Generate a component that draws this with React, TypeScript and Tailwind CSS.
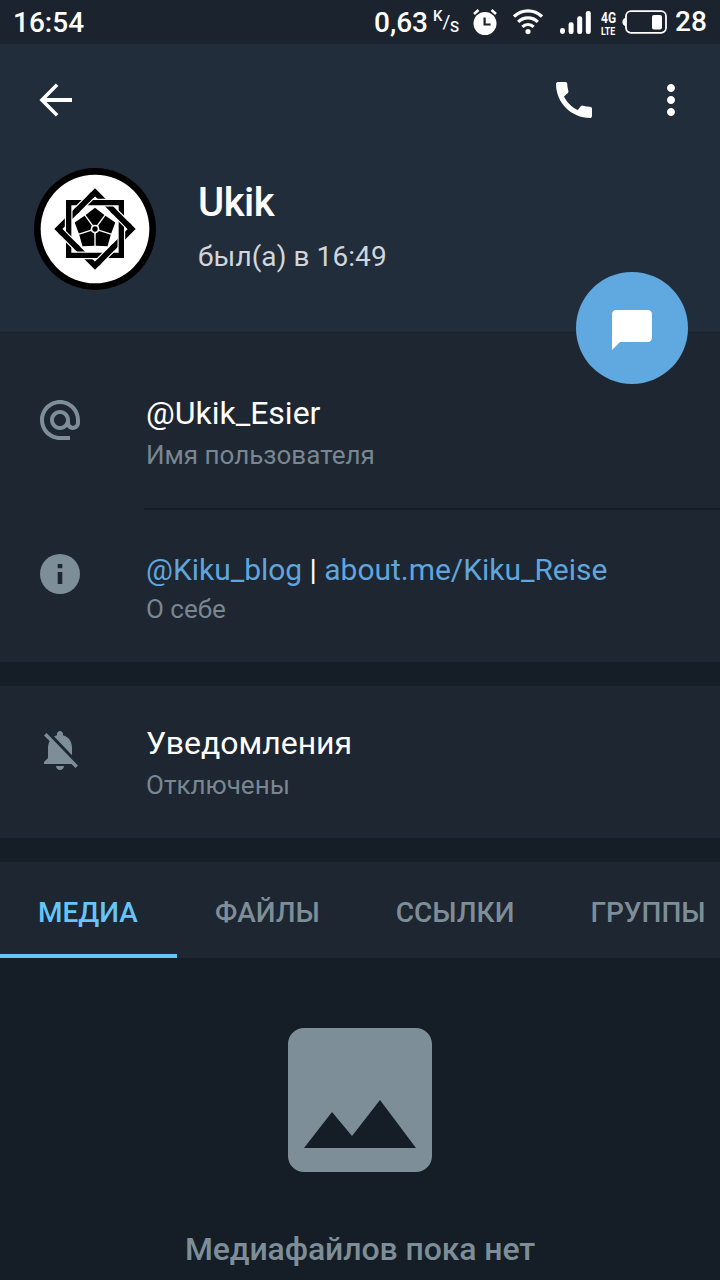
import type { ReactNode } from "react";
import {
  MdAlternateEmail,
  MdCall,
  MdChatBubble,
  MdMoreVert,
  MdNotificationsOff,
  MdPhoto,
} from "react-icons/md";

const TABS = ["МЕДИА", "ФАЙЛЫ", "ССЫЛКИ", "ГРУППЫ"];

function AlarmIcon() {
  return (
    <svg width="26" height="28" viewBox="0 0 26 28" fill="none">
      <circle cx="13" cy="15.5" r="11.5" fill="#fff" />
      <path d="M2 6 6.5 2M24 6 19.5 2" stroke="#fff" strokeWidth="2.6" />
      <path d="M12.6 9.5v7h6" stroke="#1b232e" strokeWidth="2.2" />
    </svg>
  );
}

function WifiIcon() {
  return (
    <svg width="30" height="26" viewBox="0 0 30 26" fill="none" stroke="#fff" strokeWidth="3.2">
      <path d="M1 7.6a20 20 0 0 1 28 0" />
      <path d="M5.2 12.8a14 14 0 0 1 19.6 0" />
      <path d="M9.4 17.8a8 8 0 0 1 11.2 0" />
      <circle cx="15" cy="22.6" r="2.6" fill="#fff" stroke="none" />
    </svg>
  );
}

function SignalIcon() {
  return (
    <svg width="32" height="23" viewBox="0 0 32 23" fill="#fff">
      <rect x="0" y="17" width="5" height="6" rx="2.4" />
      <rect x="8.6" y="11.2" width="5" height="11.8" rx="2.2" />
      <rect x="17.2" y="5.2" width="5" height="17.8" rx="2.2" />
      <rect x="25.8" y="0" width="5" height="23" rx="2.2" />
    </svg>
  );
}

function BatteryIcon() {
  return (
    <svg width="46" height="24" viewBox="0 0 46 24">
      <path d="M4 7.5C1.6 8.2.4 10 .4 12s1.2 3.8 3.6 4.5z" fill="#fff" />
      <rect x="4" y="1.2" width="40" height="21.6" rx="5" fill="none" stroke="#fff" strokeWidth="1.8" />
      <rect x="30" y="5" width="10" height="14.5" rx="2" fill="#fff" />
    </svg>
  );
}

function BackIcon() {
  return (
    <svg width="48" height="48" viewBox="0 0 48 48" fill="none" stroke="#fff">
      <path d="M11 24H40" strokeWidth="4" />
      <path d="M25.1 8.8 9.9 24l15.2 15.2" strokeWidth="3.5" />
    </svg>
  );
}

function InfoIcon() {
  return (
    <svg width="48" height="48" viewBox="0 0 48 48" fill="#1d2631" className="-mt-[2px]">
      <circle cx="24" cy="24" r="20" fill="#7d8e98" />
      <rect x="21.7" y="14" width="4.6" height="4.2" />
      <rect x="21.7" y="22" width="4.6" height="12" />
    </svg>
  );
}

/** Woven square + diamond around a five-petal flower. */
function Avatar() {
  return (
    <svg width="122" height="122" viewBox="-183 -183 366 366">
      <circle r="183" fill="#000" />
      <circle r="163" fill="#fff" />
      <g fill="none">
        <path d="M0-110 110 0 0 110-110 0z" stroke="#000" strokeWidth="17" />
        <path d="M-79-79H79V79H-79z" stroke="#fff" strokeWidth="23" />
        <path d="M-79-79H79V79H-79z" stroke="#000" strokeWidth="16" />
        {[0, 90, 180, 270].map((angle) => (
          <g key={angle} transform={`rotate(${angle})`}>
            <path d="M-52-58-13-97" stroke="#fff" strokeWidth="24" />
            <path d="M-58-52-6-104" stroke="#000" strokeWidth="17" />
          </g>
        ))}
      </g>
      {[0, 72, 144, 216, 288].map((angle) => (
        <path key={angle} d="M-6-12-28-42 0-64 28-42 6-12z" transform={`rotate(${angle})`} />
      ))}
      <circle r="13" fill="#fff" />
      <circle r="8" />
    </svg>
  );
}

function StatusBar() {
  return (
    <div className="flex h-11 bg-[#1b232e] pl-[13px] text-[28px] font-medium leading-[33px] text-white">
      <span className="w-[361px] pt-[6px]">16:54</span>
      <span className="w-[59px] pt-[6px]">0,63</span>
      <span className="flex w-[39px] text-[15px] leading-5">
        <span className="w-[9.5px] pt-[6px]">K</span>
        <span className="w-[7.5px] pt-[12px] text-[19px] font-normal">/</span>
        <span className="pt-[17px]">S</span>
      </span>
      <span className="w-[41px] pt-2">
        <AlarmIcon />
      </span>
      <span className="w-[47px] pt-[9px]">
        <WifiIcon />
      </span>
      <span className="w-[41px] pt-[11px]">
        <SignalIcon />
      </span>
      <span className="flex w-[21px] flex-col pt-[11px] font-bold">
        <span className="origin-left scale-x-[0.8] text-[15px] leading-[15px]">4G</span>
        <span className="origin-left scale-x-[0.8] text-[11px] leading-[11px]">LTE</span>
      </span>
      <span className="w-[53px] pt-[10px]">
        <BatteryIcon />
      </span>
      <span className="pt-[5px]">28</span>
    </div>
  );
}

function InfoRow({
  icon,
  title,
  label,
  className,
  titleClass = "text-[32px]",
  gap = "mt-2",
}: {
  icon: ReactNode;
  title: ReactNode;
  label: string;
  className: string;
  titleClass?: string;
  gap?: string;
}) {
  return (
    <div className={`flex pl-9 ${className}`}>
      <div className="w-[110px] pt-[2px] text-[#7d8e98]">{icon}</div>
      <div>
        <p className={`leading-[38px] text-white ${titleClass}`}>{title}</p>
        <p className={`text-[26px] leading-[30px] text-[#788791] ${gap}`}>{label}</p>
      </div>
    </div>
  );
}

export default function App() {
  return (
    <div className="flex h-[1280px] w-[720px] flex-col overflow-hidden whitespace-nowrap bg-[#151d26] font-['Roboto',sans-serif]">
      <StatusBar />

      <header className="relative h-[288px] bg-[#222d3b] text-white">
        <div className="flex h-28 items-center pl-8 pr-[25px]">
          <BackIcon />
          <MdCall size={48} className="ml-auto" />
          <MdMoreVert size={48} className="ml-[49px]" />
        </div>
        <div className="flex pl-[34px] pt-3">
          <Avatar />
          <div className="ml-[42px] pt-[11px]">
            <h1 className="text-[40px] font-medium leading-[47px] tracking-[-0.5px]">Ukik</h1>
            <p className="mt-[14px] text-[28px] leading-[33px] tracking-[0.08px] text-[#d0d6dc]">был(а) в 16:49</p>
          </div>
        </div>
        <button className="absolute right-8 top-[228px] flex h-28 w-28 items-center justify-center rounded-full bg-[#60a8e0]">
          <MdChatBubble size={48} className="mt-1" />
        </button>
      </header>

      <section className="h-[330px] border-t border-[#19212b] bg-[#1d2631]">
        <InfoRow
          className="h-[175px] pt-[61px]"
          icon={<MdAlternateEmail size={48} />}
          title="@Ukik_Esier"
          label="Имя пользователя"
        />
        <div className="ml-36 h-[2px] bg-[#151c25]" />
        <InfoRow
          className="pt-10"
          icon={<InfoIcon />}
          title={
            <>
              <span className="text-[#60a5dc]">@Kiku_blog</span> |{" "}
              <span className="text-[#60a5dc]">about.me/Kiku_Reise</span>
            </>
          }
          titleClass="pt-px text-[30px] tracking-[-0.03px]"
          label="О себе"
          gap="mt-[5px]"
        />
      </section>

      <section className="mt-6 h-[152px] bg-[#1d2631]">
        <InfoRow
          className="pt-[38px]"
          icon={<MdNotificationsOff size={48} />}
          title="Уведомления"
          label="Отключены"
        />
      </section>

      <nav className="mt-6 flex h-24 shrink-0 bg-[#1d2631] text-[28px] font-medium leading-[33px]">
        {TABS.map((tab, i) => (
          <div
            key={tab}
            className={`shrink-0 border-b-4 pl-[38px] pt-[34px] ${
              i === 0 ? "w-[177px] border-[#65c5f8] text-[#65c5f8]" : "border-transparent pr-[38px] text-[#7d8e98]"
            }`}
          >
            {tab}
          </div>
        ))}
      </nav>

      <main className="flex flex-col items-center pt-[46px] text-[#7d8e98]">
        <MdPhoto size={192} />
        <p className="mt-[34px] text-[32px] font-medium leading-[38px] tracking-[-0.1px]">Медиафайлов пока нет</p>
      </main>
    </div>
  );
}
